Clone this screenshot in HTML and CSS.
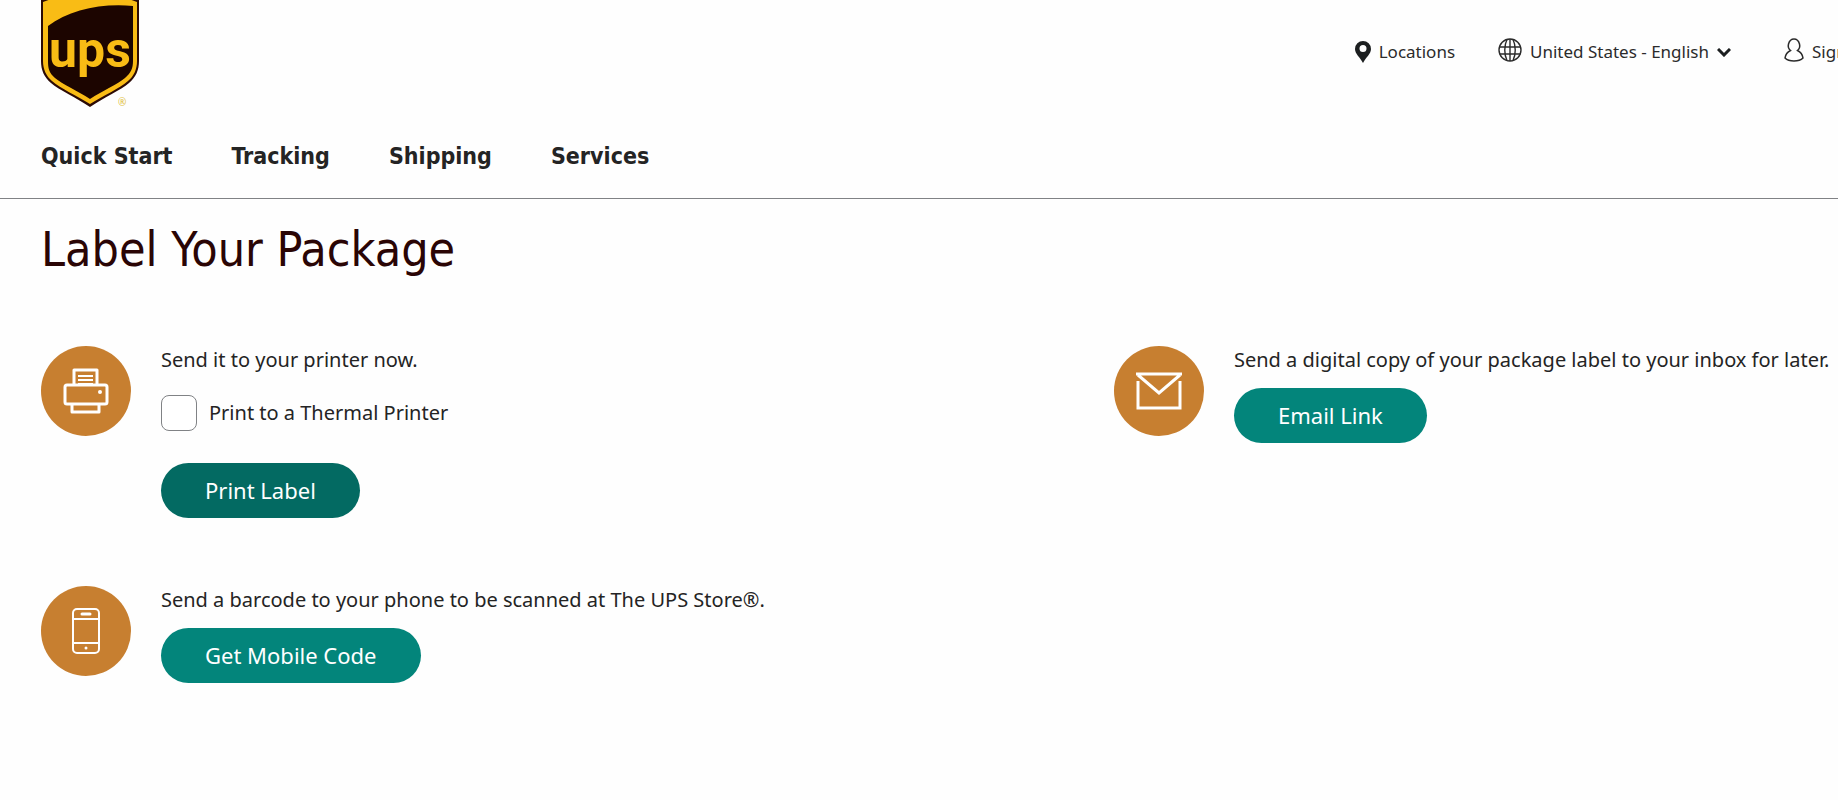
FILE: index.html
```html
<!DOCTYPE html>
<html lang="en">
<head>
    <meta charset="UTF-8">
    <meta name="viewport" content="width=device-width, initial-scale=1.0">
    <title>Label Your Package | UPS - United States</title>
    <link rel="stylesheet" href="styles.css">
</head>
<body>

    <header class="header">
        <div class="header-top">
            <a class="logo" href="#" aria-label="UPS Home">
                <svg width="98" height="108" viewBox="0 0 98 108">
                    <path d="M0 0H98V61C98 70 95 77 88 83C80 90 62 98 49 107C36 98 18 90 10 83C3 77 0 70 0 61Z" fill="#2b0a05"/>
                    <path d="M2 2Q22 -6 49 -6T96 2V61C96 69 93 76 87 81C79 88 62 96 49 104C36 96 19 88 11 81C5 76 2 69 2 61Z" fill="#f9bc15"/>
                    <path d="M7 26C28 10 60 3 92 6V61C92 68 90 73 84 78C77 84 61 91 49 99C37 91 21 84 14 78C8 73 7 68 7 61Z" fill="#1c0500"/>
                    <text class="logo-text" x="49" y="67" text-anchor="middle">ups</text>
                    <text class="logo-mark" x="77" y="106">®</text>
                </svg>
            </a>
            <div class="utility">
                <a class="utility-link" href="#">
                    <svg width="16" height="22" viewBox="0 0 16 22"><path d="M8 0a8 8 0 0 0-8 8c0 5 5 8 8 14 3-6 8-9 8-14a8 8 0 0 0-8-8zm0 4a3 3 0 1 1 0 7 3 3 0 0 1 0-7z" fill="#1c1f20"/></svg>
                    <span>Locations</span>
                </a>
                <button class="utility-link language" type="button">
                    <svg class="raised" width="24" height="24" viewBox="0 0 24 24" fill="none" stroke="#2b2b2b" stroke-width="1.4"><circle cx="12" cy="12" r="11"/><path d="M12 1v22M1.500 9h21M1.500 16h21M9 1.500c-3 6-3 15 0 21M15 1.500c3 6 3 15 0 21"/></svg>
                    <span>United States - English</span>
                    <svg width="14" height="9" viewBox="0 0 14 9" fill="none" stroke="#1c1f20" stroke-width="3"><path d="M1 1l6 6 6-6"/></svg>
                </button>
                <a class="utility-link sign-in" href="#">
                    <svg class="raised" width="20" height="24" viewBox="0 0 20 24" fill="none" stroke="#2b2b2b" stroke-width="1.500"><path d="M6.500 12.500C4 10.500 4 8 4.500 6C5.500 2.500 7.500 1 10 1S14.500 2.500 15.500 6C16 8 16 10.500 13.500 12.500C16.500 14 18.500 16.500 19 20C16.500 22.500 13 23 10 23S3.500 22.500 1 20C1.500 16.500 3.500 14 6.500 12.500Z"/></svg>
                    <span>Sign in</span>
                </a>
            </div>
        </div>
        <nav class="main-nav">
            <a href="#">Quick Start</a>
            <a href="#">Tracking</a>
            <a href="#">Shipping</a>
            <a href="#">Services</a>
        </nav>
    </header>

    <main class="content">
        <h1>Label Your Package</h1>
        <div class="options">
            <section class="option">
                <span class="option-icon">
                    <svg width="46" height="46" viewBox="0 0 46 46" fill="none" stroke="#fff" stroke-width="3" stroke-linejoin="round"><path d="M11 17V2h23v15"/><path d="M15 8h15M15 12h15M15 16h15" stroke-width="2"/><path d="M9 36H4a2 2 0 0 1-2-2V19a2 2 0 0 1 2-2h38a2 2 0 0 1 2 2v15a2 2 0 0 1-2 2h-5M7 36h32M9 36v8h27v-8"/><circle cx="37" cy="24" r="2" fill="#fff" stroke="none"/></svg>
                </span>
                <div class="option-body">
                    <p>Send it to your printer now.</p>
                    <label class="check" for="thermal">
                        <input type="checkbox" id="thermal">
                        <span>Print to a Thermal Printer</span>
                    </label>
                    <button class="btn btn-dark" type="button">Print Label</button>
                </div>
            </section>

            <section class="option">
                <span class="option-icon">
                    <svg width="46" height="38" viewBox="0 0 46 38" fill="none" stroke="#fff" stroke-width="3"><path d="M0 2H46M2 9V36H44V9M2 3L23 21L44 3"/></svg>
                </span>
                <div class="option-body">
                    <p>Send a digital copy of your package label to your inbox for later.</p>
                    <button class="btn" type="button">Email Link</button>
                </div>
            </section>

            <section class="option">
                <span class="option-icon">
                    <svg width="28" height="46" viewBox="0 0 28 46" fill="none" stroke="#fff" stroke-width="2"><rect x="1" y="1" width="26" height="44" rx="4"/><path d="M1 11h26M1 35h26"/><path d="M10 6h8" stroke-width="3" stroke-linecap="round"/><circle cx="14" cy="40" r="1.500" fill="#fff" stroke="none"/></svg>
                </span>
                <div class="option-body">
                    <p>Send a barcode to your phone to be scanned at The UPS Store®.</p>
                    <button class="btn" type="button">Get Mobile Code</button>
                </div>
            </section>
        </div>
    </main>

</body>
</html>
```
FILE: styles.css
```css
* {
    box-sizing: border-box;
}

body {
    margin: 0;
    background: #fefefe;
    color: #242424;
    font-family: "Noto Sans", Tahoma, sans-serif;
    font-size: 20px;
    line-height: 28px;
}

a {
    color: inherit;
    text-decoration: none;
}

button {
    font-family: inherit;
    cursor: pointer;
}

.header {
    border-bottom: 1px solid #808285;
}

.header-top {
    display: flex;
    justify-content: space-between;
    align-items: flex-start;
    padding-left: 41px;
}

.logo svg {
    display: block;
}

.logo-text {
    font-family: "Roboto", sans-serif;
    font-weight: bold;
    font-size: 50px;
    fill: #f9bc15;
}

.logo-mark {
    font-size: 10px;
    fill: #e0c040;
}

.utility {
    display: flex;
    gap: 43px;
    padding-top: 38px;
    overflow: hidden;
}

.utility-link {
    display: flex;
    align-items: center;
    gap: 8px;
    padding: 0;
    border: 0;
    background: none;
    color: #2b2b2b;
    font-size: 17px;
    line-height: 28px;
    white-space: nowrap;
}

.raised {
    margin-bottom: 4px;
}

/* the last link runs off the edge of the bar */
.sign-in {
    width: 54px;
    margin-left: 10px;
}

.utility-link svg {
    flex-shrink: 0;
}

.main-nav {
    display: flex;
    gap: 59px;
    padding: 34px 41px 28px;
    font-family: "DejaVu Sans Condensed", Tahoma, sans-serif;
    font-size: 23px;
    font-weight: bold;
}

.content {
    padding: 22px 0 40px 41px;
}

h1 {
    margin: 0 0 68px;
    color: #2a0505;
    font-family: "DejaVu Sans Condensed", Tahoma, sans-serif;
    font-size: 48px;
    font-weight: normal;
    line-height: 57px;
}

.options {
    display: grid;
    grid-template-columns: 1fr 724px;
    row-gap: 68px;
}

.option {
    display: flex;
    align-items: flex-start;
    gap: 30px;
}

.option-icon {
    display: flex;
    flex-shrink: 0;
    align-items: center;
    justify-content: center;
    width: 90px;
    height: 90px;
    border-radius: 50%;
    background: #c77f30;
}

.option-body p {
    margin: 0 0 14px;
}

.check {
    display: flex;
    align-items: center;
    gap: 12px;
    margin: 21px 0 32px;
}

.check input {
    appearance: none;
    width: 36px;
    height: 36px;
    margin: 0;
    border: 1px solid #808285;
    border-radius: 8px;
    background: #fff;
}

.btn {
    height: 55px;
    padding: 0 44px 2px;
    border: 0;
    border-radius: 28px;
    background: #03857b;
    color: #fff;
    font-size: 22px;
}

.btn-dark {
    background: #036a62;
}
```
